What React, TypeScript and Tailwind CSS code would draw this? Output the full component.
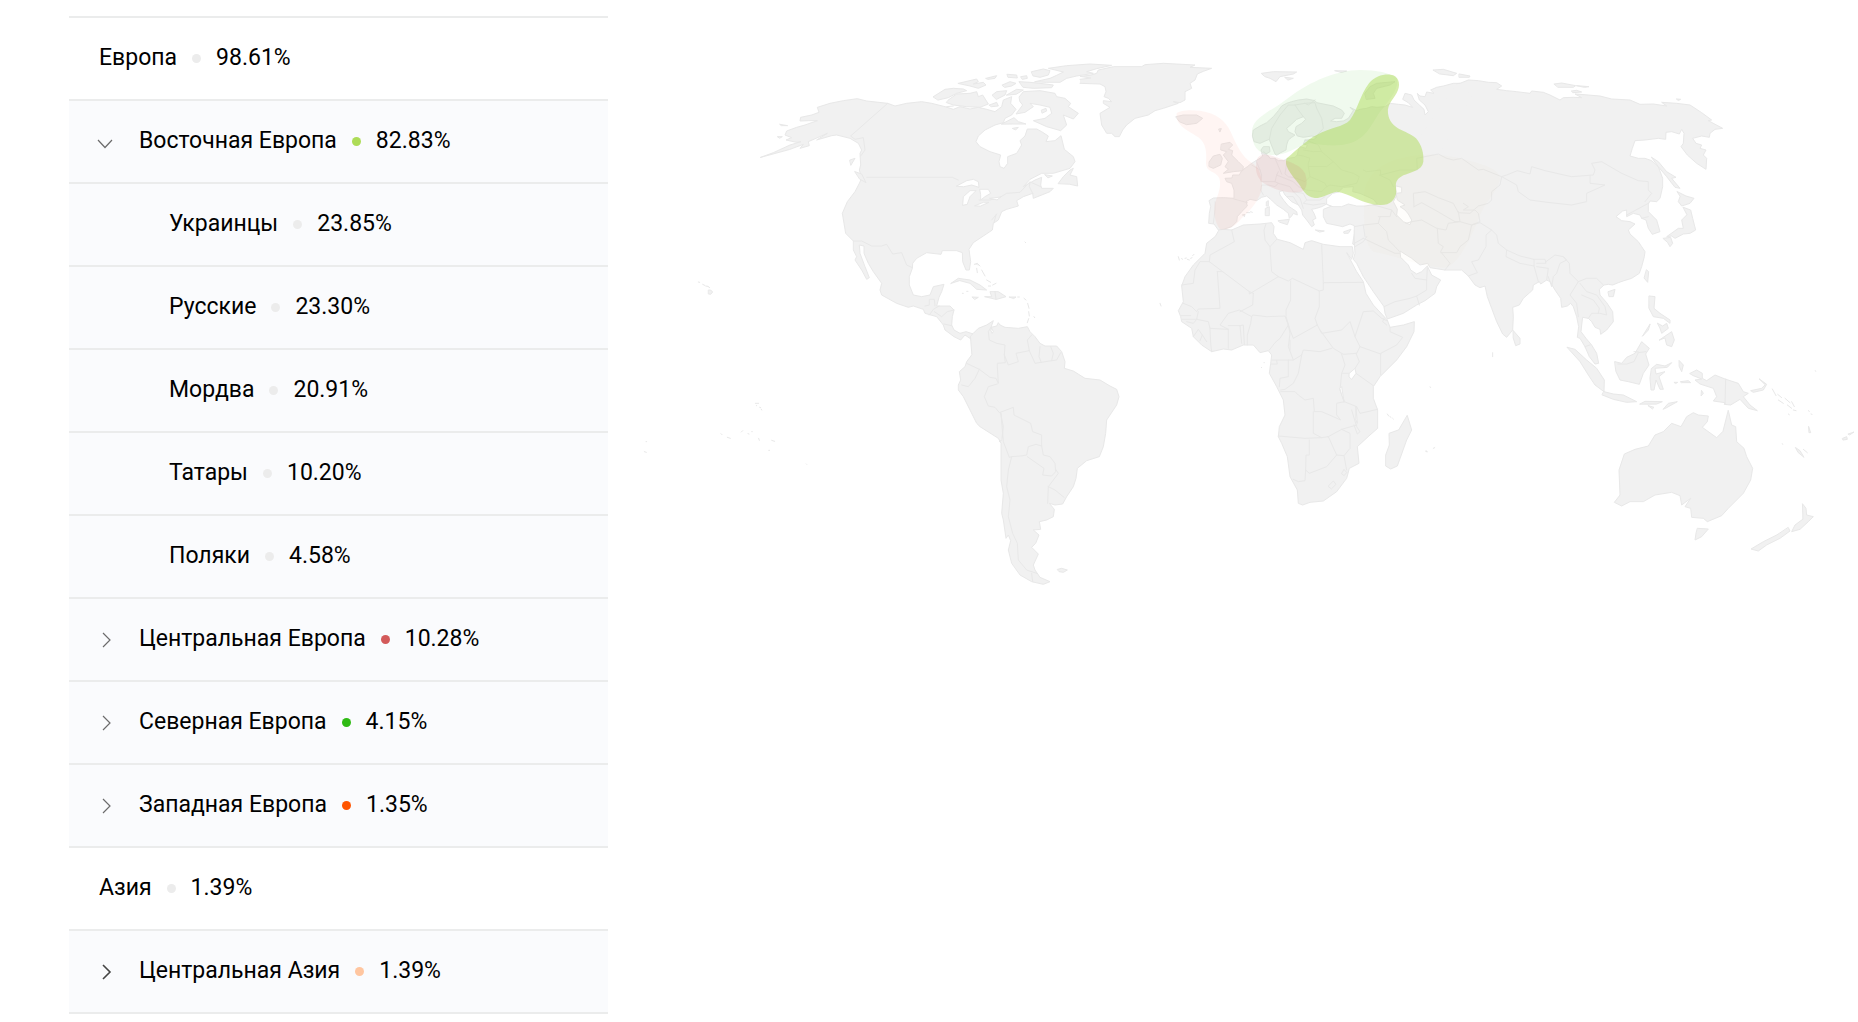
import { useState } from "react";
import clsx from "clsx";

interface Region {
  id: string;
  name: string;
  value: string;
  level: 0 | 1 | 2;
  dot: string;
  parent?: string;
  strong?: boolean;
}

const REGIONS: Region[] = [
  { id: "europe", name: "Европа", value: "98.61%", level: 0, dot: "bg-[#ececec]" },
  { id: "east", name: "Восточная Европа", value: "82.83%", level: 1, dot: "bg-[#addc57]" },
  { id: "ukr", name: "Украинцы", value: "23.85%", level: 2, dot: "bg-[#ececec]", parent: "east" },
  { id: "rus", name: "Русские", value: "23.30%", level: 2, dot: "bg-[#ececec]", parent: "east" },
  { id: "mor", name: "Мордва", value: "20.91%", level: 2, dot: "bg-[#ececec]", parent: "east" },
  { id: "tat", name: "Татары", value: "10.20%", level: 2, dot: "bg-[#ececec]", parent: "east" },
  { id: "pol", name: "Поляки", value: "4.58%", level: 2, dot: "bg-[#ececec]", parent: "east" },
  { id: "central", name: "Центральная Европа", value: "10.28%", level: 1, dot: "bg-[#d35a5a]" },
  { id: "north", name: "Северная Европа", value: "4.15%", level: 1, dot: "bg-[#2fba14]" },
  { id: "west", name: "Западная Европа", value: "1.35%", level: 1, dot: "bg-[#ff5500]" },
  { id: "asia", name: "Азия", value: "1.39%", level: 0, dot: "bg-[#ececec]" },
  { id: "casia", name: "Центральная Азия", value: "1.39%", level: 1, dot: "bg-[#ffc6a0]", strong: true },
];

function Chevron({ open, strong }: { open: boolean; strong?: boolean }) {
  return (
    <svg viewBox="0 0 24 24" className="size-6 shrink-0" fill="none" stroke={strong ? "#444" : "#6b6b6b"} strokeWidth={strong ? 1.6 : 1.2} aria-hidden="true">
      <path d={open ? "M5 10 12 17.5 19 10" : "M10 5 17 12 10 19"} />
    </svg>
  );
}

function RowText({ region }: { region: Region }) {
  return (
    <span className="flex items-center gap-[15px] whitespace-nowrap">
      <span>{region.name}</span>
      <span className={clsx("size-[9px] rounded-full", region.dot)} />
      <span>{region.value}</span>
    </span>
  );
}

function RegionRow({ region, open, onToggle }: { region: Region; open: boolean; onToggle: () => void }) {
  return (
    <li className={clsx("h-[83px] border-b-2 border-[#ebecec]", region.level > 0 && "bg-[#fafbfd]")}>
      {region.level === 1 ? (
        <button type="button" aria-expanded={open} onClick={onToggle} className="flex h-full w-full cursor-pointer items-center gap-[22px] pl-6 text-left">
          <Chevron open={open} strong={region.strong} />
          <RowText region={region} />
        </button>
      ) : (
        <div className={clsx("flex h-full items-center", region.level === 0 ? "pl-[30px]" : "pl-[100px]")}>
          <RowText region={region} />
        </div>
      )}
    </li>
  );
}

const NORTH_AMERICA =
  "M62 322 100 308 150 285 183 275 170 277 138 270 155 263 135 255 140 243 170 232 195 225 232 212 205 212 180 213 182 202 215 195 237 187 232 172 270 160 310 152 352 146 380 153 443 160 465 168 500 160 545 155 575 160 615 170 640 178 660 170 690 177 715 172 740 178 765 185 785 170 790 150 815 140 812 160 828 178 815 195 795 205 790 218 765 225 735 240 715 258 708 275 720 290 750 305 782 315 777 335 780 350 792 355 803 340 803 320 830 310 845 285 840 272 855 258 862 237 890 237 905 245 925 258 918 275 945 272 963 257 973 298 1000 320 1005 335 990 355 940 370 905 370 870 388 850 410 885 390 905 382 902 405 905 415 940 415 930 425 880 445 878 430 850 440 830 452 835 468 800 478 785 485 775 510 760 520 757 540 730 558 700 578 687 598 692 635 688 660 678 660 668 635 667 608 650 602 607 602 603 613 560 608 530 625 518 640 517 655 508 680 508 705 520 735 545 740 570 735 580 710 612 703 605 725 597 742 590 768 630 768 642 780 637 800 635 825 642 840 660 850 678 845 700 852 697 870 675 855 662 870 642 860 615 840 610 825 590 800 555 790 550 778 520 768 505 772 470 760 425 735 420 720 425 700 400 665 385 640 372 610 372 588 358 585 360 610 375 650 388 683 380 688 365 660 345 630 350 620 340 600 340 573 317 550 312 520 307 490 322 455 345 425 358 400 365 385 358 360 362 345 360 310 365 300 355 280 330 265 290 255 275 257 230 270 262 250 205 275 208 287 180 295 190 283 150 298Z";

const ARCTIC_ISLANDS =
  "M580 140 615 118 640 115 670 117 680 122 650 130 625 143 595 150ZM625 150 650 132 690 130 710 125 715 140 728 135 745 162 720 172 680 170 640 165 620 158ZM655 100 710 87 715 95 700 102 730 97 738 105 715 115 690 108ZM738 85 770 77 765 85 745 88ZM757 135 770 125 800 122 795 135 770 148ZM748 165 770 157 775 168 755 170ZM787 105 810 95 828 100 815 108 795 112ZM802 73 830 75 832 84 805 82ZM843 80 860 77 862 85 848 88ZM838 95 870 97 900 100 940 105 935 113 880 115 850 112ZM875 65 910 57 930 62 925 75 900 82 880 78ZM885 95 930 85 950 76 970 66 925 55 980 47 1050 42 1115 46 1070 56 1040 65 1060 70 1010 78 980 85 960 97 920 97ZM800 135 830 118 850 120 830 132ZM838 140 850 125 900 122 945 130 950 140 975 145 992 160 985 170 1015 190 1000 207 970 195 980 225 962 242 920 230 880 212 915 205 935 190 930 172 900 165 870 160 880 170 855 187 828 192 848 165 840 155ZM785 222 822 203 835 215 858 222 820 222ZM818 235 835 232 828 239ZM905 180 918 175 920 183 907 189ZM955 400 970 380 990 360 1000 355 990 375 1010 380 1013 408 990 403ZM345 365 365 372 378 398 360 388ZM330 330 345 325 333 345ZM120 223 143 227 125 227ZM113 260 127 260 120 264ZM915 374 937 378 925 383Z";

const CARIBBEAN =
  "M633 700 655 685 690 690 720 705 740 720 710 718 690 700 660 692ZM735 740 755 740 750 725 775 725 798 740 770 748ZM808 741 828 741 822 745ZM697 741 715 742 705 748ZM703 643 712 640 720 648M710 655 712 668M725 660 735 678M740 690 752 697M768 700 758 705M745 708 752 708M833 741 838 741M852 745 858 750M863 760 867 775M866 785 868 798M866 806 862 818M882 800 884 803M855 576 857 578M667 730 670 730M680 724 684 724";

const NA_BORDERS =
  "M443 160 332 258 345 268 370 263 375 300 362 318M380 382 637 382 655 390M717 450 750 450 780 442 800 430 840 427 870 395 868 410 878 430M340 573 365 573 395 588 425 588 440 583 458 612 485 608 500 645 517 653M555 768 568 765 568 748 583 748 585 768M568 795 580 778 597 768M583 785 605 800 622 785 642 780M612 822 635 827M765 725 768 748M768 495 762 518M755 510 770 492M620 170 640 168M875 398 902 410";

const LAKES =
  "M650 408 680 392 700 388 715 395 717 412 695 405 672 410ZM668 465 670 440 690 422 708 422 690 440 682 462ZM720 418 745 418 752 430 735 440 722 450 722 435ZM705 467 730 457 747 457 722 468ZM750 445 782 441 772 449Z";

const GREENLAND =
  "M0 88 32 84 0 79 30 76 50 70 55 60 100 50 185 50 195 44 250 40 345 45 330 52 395 55 370 64 352 72 345 90 330 100 335 115 315 125 315 150 300 158 280 155 295 160 250 175 225 182 205 195 165 205 140 225 128 240 118 260 105 260 95 250 80 250 65 225 60 190 90 172 70 160 70 152 95 155 85 145 72 140 78 125 75 110 60 102 0 100";

const SOUTH_AMERICA =
  "M92 108 100 100 115 85 140 75 160 62 153 82 170 78 175 68 180 75 195 82 235 85 262 80 270 95 285 110 300 130 315 138 350 138 365 155 375 185 373 205 400 213 435 235 480 240 510 258 530 268 537 290 530 315 500 360 497 400 490 440 478 470 440 482 412 505 408 535 400 560 380 590 368 612 345 615 328 610 343 628 340 650 320 660 298 665 302 688 280 690 297 705 287 730 275 742 295 762 280 795 285 810 300 832 330 845 310 853 275 845 240 825 215 790 205 750 212 722 205 705 198 715 190 660 185 640 190 580 183 540 183 430 175 415 120 380 110 370 90 330 70 290 55 270 55 255 62 240 58 215 75 200 80 185 95 165Z";

const SA_BORDERS =
  "M153 82 145 95 148 120 170 130 195 135 193 165 196 188 172 190 172 200 175 250 168 235 150 232 118 208 80 190M118 208 105 235 85 260 65 255M172 252 145 260 133 290 145 318 165 322 178 338 220 322 222 345 272 370 278 395 305 405 305 438 288 433 265 440 260 465 243 468 215 470 208 472 190 425 183 340M305 438 310 465 330 470 345 490 347 515 335 528 308 525 312 505 262 470M347 508 355 520 325 560 323 610M325 560 345 570 372 592M215 470 205 510 200 560 210 600 205 650 218 700 232 730 235 780 260 810 290 820M193 165 205 195 235 185 228 160 268 152 262 120 275 105M268 152 285 190 335 182 340 160 332 140M300 140 297 170 303 185M335 182 350 180 362 158M185 420 178 425M275 820 278 845M182 340 190 380 186 415";

const AFRICA =
  "M180 57 215 60 250 45 300 42 335 38 342 50 340 70 352 88 390 98 430 118 435 98 455 92 490 103 540 110 577 110 580 130 575 148 560 128 590 185 610 215 618 250 640 285 668 315 682 330 690 352 730 345 763 335 762 365 740 410 710 450 680 480 660 500 640 530 640 565 653 600 653 655 630 675 592 710 597 760 568 775 560 805 530 845 490 873 450 877 428 885 415 880 412 840 390 800 382 740 365 700 355 680 358 650 375 615 370 570 350 530 328 490 332 460 335 435 325 422 300 428 280 405 250 405 215 420 190 417 155 425 125 405 100 380 95 355 65 335 62 320 55 302 70 275 65 228 75 200 100 165 135 130 140 100 165 80ZM742 617 755 660 740 690 712 768 692 777 677 768 677 735 688 705 687 670 715 660Z";

const AFRICA_BORDERS =
  "M215 60 223 95 205 105 150 135 148 155 120 155 105 180 100 220 65 225M148 155 268 245 268 252 355 200 335 185 330 110 315 90 312 60 318 42M330 110 350 88M172 185 188 185M172 185 180 295 115 297 110 305 95 290 70 280M62 317 92 317M65 328 110 328 115 305M110 328 145 335 150 355 205 358 180 345 205 310 238 300 275 320 278 315 320 320 375 318 385 345 360 385 345 398 328 420M280 250 278 285 240 305M268 245 280 250M355 200 385 213 397 205 478 243 478 290 465 325 472 345 400 385 390 360 378 320 378 300 392 270 392 213M478 243 490 240 490 218 610 217M490 218 485 105M472 345 485 370 545 360 570 335 585 380 600 410 590 430 550 433 520 415 480 360M585 380 610 305 640 303 665 325 680 332M680 345 668 335 672 325M690 352 690 365 728 382 710 405 662 430 662 495M600 410 662 432M545 433 555 465 545 490 540 540 553 575 530 580 530 615 542 630 520 620 485 605 463 605 460 565 435 570 415 555 405 545 362 545M553 575 590 590 600 610 653 598M588 490 640 527M588 430 598 455 585 475M545 490 568 490M390 420 390 390M385 345 390 370 385 410 400 450 335 450M400 450 425 435 430 420 480 425 515 415M425 435 415 490 400 520 375 538 362 540M385 450 385 500 360 505 358 530M350 452 352 462 333 462M460 605 460 670 485 683 435 685 355 678M485 683 505 680 530 735 552 737 570 715 570 670 545 658 590 645M505 680 545 658M448 690 448 735 438 735 437 780 435 812 415 815 400 808M437 780 448 790 500 770 530 735M552 737 558 770 560 780M505 828 520 813 528 823 515 836ZM545 790 552 778 560 788 553 796ZM575 600 590 650 600 665 592 672 582 645M205 358 205 415M205 347 240 347 245 400M240 347 250 345 253 403M262 405 262 375 272 340 275 320M155 425 152 400 150 355M100 380 115 358 127 375 120 392M127 375 140 395M80 335 100 340 110 328";

const AFRICA_LAKES = "M568 490 585 475 588 490 575 508 568 502ZM540 535 545 530 552 575ZM588 592 592 640 588 630Z";

// Europe up to the Levant, left open on the side where it meets Asia
const EUROPE =
  "M900 100 880 100 850 108 830 112 812 120 822 130 800 126 795 140 780 138 772 130 778 150 795 165 805 185 795 195 792 178 778 165 762 150 755 135 735 130 728 148 745 158 758 172 735 165 715 163 690 160 675 170 650 172 635 170 620 175 600 178 590 182 570 172 580 182 565 205 550 213 530 215 512 213 525 205 545 205 553 190 545 180 520 168 495 163 470 158 465 152 440 147 415 150 395 155 380 160 365 168 355 182 340 200 320 218 300 228 280 240 277 258 282 275 300 280 318 272 328 268 333 282 345 312 350 316 362 308 378 300 380 285 385 270 395 262 405 255 385 245 380 235 395 222 410 208 430 200 437 208 425 220 408 230 405 245 412 258 430 262 455 258 470 262 462 268 435 270 430 282 442 285 438 295 420 290 415 300 412 315 405 322 385 325 370 332 355 332 345 325 330 325 325 318 318 312 330 305 328 290 310 290 303 300 308 318 300 325 288 332 275 340 262 350 245 362 238 375 218 375 216 384 195 385 200 395 215 400 222 420 222 445 190 443 160 444 147 452 152 470 148 490 146 520 162 522 175 540 190 538 215 530 230 515 232 500 245 485 262 468 258 455 270 448 290 452 305 442 320 438 332 448 350 465 370 478 385 490 388 505 395 498 400 490 412 495 410 485 385 468 372 452 360 435 358 425 368 422 375 435 395 455 415 465 425 480 428 495 440 510 455 530 463 525 458 510 468 505 462 490 455 478 470 475 485 470 500 462 515 468 490 478 490 500 500 520 525 525 548 530 570 522 583 527 583 550 578 582 600 595";

const ASIA =
  "M170 101 180 100 205 90 235 92 265 97 290 98 305 108 290 118 320 122 350 125 390 130 395 123 430 127 450 135 480 150 490 143 520 142 545 143 525 132 540 133 600 138 635 147 690 150 720 163 760 162 800 168 785 157 830 160 870 165 905 188 935 210 925 212 968 235 945 238 930 250 928 262 905 258 878 265 888 280 905 285 900 295 918 300 910 315 920 325 918 358 890 340 862 315 843 290 850 280 852 250 845 238 838 252 815 245 798 247 797 268 775 265 735 270 705 272 697 295 690 318 715 325 735 325 755 332 775 350 788 385 788 410 780 445 770 455 750 453 745 462 745 485 770 510 780 545 757 553 745 535 738 510 725 505 720 495 700 490 680 500 680 480 668 483 648 500 665 512 690 515 705 522 685 540 690 552 715 575 725 590 735 605 733 620 725 650 718 670 695 685 672 692 655 698 638 705 625 703 612 705 598 718 600 735 620 758 638 785 640 815 620 840 602 853 600 838 585 832 575 815 565 805 548 802 545 825 543 845 558 865 575 885 590 910 596 940 585 942 568 920 555 890 540 865 532 862 536 830 530 800 520 770 512 760 502 768 485 772 482 745 465 720 450 695 440 690 422 702 418 695 400 705 398 720 370 745 358 765 338 772 340 800 338 840 320 862 308 852 290 815 275 775 262 740 255 708 240 713 225 705 205 678 185 660 135 660 90 653 83 640 60 645 35 625 0 603 2 622 25 645 32 660 50 672 65 665 82 648 95 675 122 690 110 710 105 730 75 752 50 765 10 790 -38 807 -45 790 -48 770 -80 725 -110 680 -130 640 -140 628 -135 610 -137 580 -137 540";

const ASIA_BORDERS =
  "M-110 360 -100 365 -58 360 -58 375 0 360 52 360 50 325 115 312 140 325 160 330 185 325 235 360 250 358 305 380 300 405 275 425 275 450 265 460 235 468 210 490 175 488 160 460 115 443 75 425 40 430 42 470M305 380 320 375 352 362 390 372 395 350 435 362 470 370 515 380 580 375 585 360 575 340 605 335 665 370 715 392 745 395 745 420 755 430 735 455M305 380 350 405 355 425 390 450 450 458 515 465 560 455 560 430 615 405 570 400 570 375M42 470 65 458 105 480 165 515 180 515 175 485M190 460 205 470 190 480 225 480 235 490 240 515 215 525 180 515 145 520 138 540 110 535 65 510 35 515 18 520M112 535 115 580 130 590 122 605 150 640 135 660M122 608 170 608 180 590 205 570 215 525 240 518 275 540 258 555 258 590 235 630 215 635 232 668 205 678M275 540 290 555 295 580 320 600 360 618 402 628 402 648 360 640 318 620 320 600M402 628 435 628 438 640 410 640M402 648 415 695M410 650 445 655 440 690M438 635 465 615 490 620 500 630 480 640 470 670 460 680 455 710 445 680M490 620 508 640 510 670 535 695 510 735 530 760 535 800M535 695 560 685 590 685 610 705M540 700 560 725 590 735 615 770 620 795 600 790 575 790 565 805M545 735 580 750 598 775 595 790M555 890 570 885M680 495 745 460M725 505 745 500M-65 520 -40 545 -35 570 -15 590 -3 603M-60 500 -65 520 -110 525 -137 530M-110 565 -137 580M-100 560 -110 575 -135 590M-110 565 -15 610 0 610M-110 525 -105 560M-48 770 -15 755 30 745 50 738 58 765M50 738 80 720 80 690 45 685 35 670M80 690 82 655M-80 465 -60 470 -25 480 -30 500 -65 500M-25 480 -10 500";

const EUROPE_BORDERS =
  "M328 268 335 235 360 195 385 165 405 165 435 160 465 158 470 175 485 205 490 235 470 258M430 200 415 180 405 165M435 160 445 165 465 150M435 270 450 275 475 285 485 305 520 335 500 350 445 350 445 340 450 325 430 318 412 315M430 300 460 305 485 305M445 350 450 380 435 395 410 385 385 380 375 372 380 340M450 380 475 390 495 400 500 410 485 425 440 420 415 410 400 395 375 385 350 375 355 365M520 335 545 360 580 370 598 380 590 400 545 410 510 405 500 410M288 332 300 360 305 375 302 395 345 395 355 400 345 410 325 405 305 405 302 420 310 435M275 345 300 360M350 375 345 395M355 400 390 410 400 425 430 430 440 450 430 460 460 465 495 460M400 425 420 445 430 475M440 450 480 450 495 440M222 447 262 458M165 455 165 480 160 520M380 440 400 440 415 465M658 375 690 390 700 410M310 310 325 318M345 325 365 372";

const BLACK_SEA = "M500 462 500 446 518 430 535 426 550 412 580 410 578 425 600 430 640 448 652 462 615 468 590 468 565 462 545 470 520 470Z";
const CASPIAN = "M708 440 700 455 712 478 710 495 730 515 750 524 755 510 745 492 735 480 720 470 735 465 712 450 708 430 725 428 725 412 708 408Z";

const EUROPE_ISLANDS =
  "M185 282 210 277 218 285 205 298 218 302 215 315 235 335 250 350 248 362 220 365 190 370 205 358 195 350 205 335 190 315 200 305 183 300ZM148 335 160 318 180 313 187 325 182 345 160 355 148 350ZM48 200 70 195 110 195 128 205 110 220 80 224 60 216ZM305 70 340 65 410 66 400 72 360 80 348 95 330 85 315 80ZM375 82 400 85 385 90ZM615 130 630 110 650 100 705 95 690 105 650 115 640 130 645 145 620 148ZM820 60 850 58 890 70 880 77 840 72ZM898 72 930 78 928 82 898 82ZM525 62 560 63 545 67ZM317 475 328 470 328 497 317 497ZM320 455 325 452 325 468 320 468ZM355 512 388 508 382 524 360 517ZM467 540 493 543 480 546ZM552 545 573 538 565 550 553 550ZM247 495 255 493 253 500M260 488 270 488M272 485 277 487M177 237 184 236 180 245ZM305 310 312 305 318 312Z";

const ASIA_ISLANDS =
  "M463 102 485 99 527 107 520 112 475 112ZM530 107 567 110 555 112ZM515 123 530 121 545 126 520 128ZM830 147 842 148 836 151ZM755 322 775 335 800 365 828 382 815 385 840 415 825 412 800 380 775 350ZM832 425 858 438 882 445 870 460 845 468 835 455 840 440ZM850 472 872 480 878 505 887 540 870 550 850 552 825 565 815 558 800 560 835 535 850 535 845 510 860 495ZM790 565 812 562 818 580 810 590 803 578ZM740 660 746 665 743 697 733 685ZM625 725 645 718 640 740 628 740Z";

const OCEANIA =
  "M100 302 120 325 120 342 107 347 100 325ZM508 198 525 200 522 235 540 250 570 270 570 280 550 265 520 260 507 235ZM533 280 548 288 560 280 565 295 545 310 540 295ZM510 283 505 300 488 318ZM538 330 575 305 583 330 575 350 560 345 555 325ZM262 352 285 358 320 390 350 415 373 450 372 485 345 465 325 435 300 395ZM372 485 400 492 430 495 470 515 440 517 400 508 367 495ZM405 395 425 400 440 382 465 370 485 335 508 355 497 372 507 405 490 430 478 463 445 455 420 450 408 425ZM515 415 530 403 555 408 575 398 562 412 525 415 528 432 555 425 537 440 550 478 540 478 528 450 522 480 513 480 510 445ZM598 392 610 405 605 425 598 410ZM583 457 593 457 588 460ZM602 455 625 452 632 458 605 458ZM630 430 650 420 667 430 667 445 680 452 705 435 735 447 775 460 790 485 805 490 790 500 810 525 832 542 805 535 780 508 752 525 733 523 735 518 700 513 710 500 700 475 660 462 645 450 665 447 640 437ZM665 482 670 490 664 497ZM480 522 495 514 547 515 530 522ZM505 527 522 532 518 536ZM550 537 565 520 592 515 560 533ZM745 542 755 585 767 590 770 635 792 655 800 680 818 715 812 750 790 790 745 835 725 857 682 875 670 865 635 862 632 835 615 830 632 805 605 825 600 797 575 787 525 795 490 815 450 815 425 828 403 817 420 795 417 720 433 672 465 658 505 648 525 615 550 605 575 580 603 590 620 560 640 548 655 555 685 558 682 575 667 592 710 623 728 605ZM653 895 685 897 665 920 645 930 648 910ZM968 822 978 835 980 855 1000 860 985 875 960 898 935 905 945 885 968 868ZM925 893 930 903 900 925 860 945 835 963 813 957 850 935 890 915ZM838 447 860 463 850 480 820 487 812 482 845 475 855 465ZM877 477 888 497M893 493 905 503M895 510 910 520M915 505 930 518M935 515 943 530M922 525 935 535M940 540 948 542M925 552 928 554M985 542 988 544M993 552 996 553M986 590 992 608 988 608ZM947 653 960 662 972 682 955 668ZM970 658 982 668M1088 625 1100 620 1102 628 1090 630ZM1105 612 1122 606 1110 614ZM907 641 908 643M1006 422 1007 424M38 368 38 380";

const PACIFIC =
  "M175 66 179 67M188 73 194 76M197 78 204 79 209 83M206 90 212 90 218 96 212 103 206 102ZM346 430 356 430M349 437 350 437M359 442 362 443M364 448 365 450M243 521 246 524M262 532 271 535M304 516 308 512M324 521 327 522M335 515 337 515M356 535 358 541M395 541 404 544M386 571 389 571M499 612 500 613M18 545 20 545M13 575 19 577";

const ATLANTIC_INDIAN =
  "M55 140 58 150M65 145 67 148M75 145 79 144M82 148 88 150M92 145 96 143M98 137 102 133M0 280 3 288M312 458 313 458M304 472 305 473M682 612 686 618M690 620 693 622M698 625 700 627M797 724 802 726 799 722M820 715 824 713M810 531 812 532";

function WorldMap() {
  return (
    <svg viewBox="1824 0 3750 1800" className="h-auto w-full" role="img" aria-label="Карта мира" strokeLinejoin="round" strokeLinecap="round">
      <g fill="#f1f1f1" stroke="#e8e8e8" strokeWidth="3">
        <g transform="translate(1920 780)">
          <path d={PACIFIC} />
        </g>
        <g transform="translate(2220 150)">
          <path d={NORTH_AMERICA} />
          <path d={ARCTIC_ISLANDS} />
          <path d={CARIBBEAN} />
          <path d={NA_BORDERS} fill="none" />
          <path d={LAKES} fill="#fff" />
        </g>
        <path d={GREENLAND} transform="translate(3240 150)" />
        <g transform="translate(2820 900)">
          <path d={SOUTH_AMERICA} />
          <path d={SA_BORDERS} fill="none" />
          <path d="M155 85 160 95 156 100 153 92Z" fill="#fff" />
          <path d="M353 808 365 805 382 810 370 817 358 815Z" />
        </g>
        <g transform="translate(3480 630)">
          <path d={AFRICA} />
          <path d={AFRICA_BORDERS} fill="none" />
          <path d={AFRICA_LAKES} fill="#fff" />
          <path d={ATLANTIC_INDIAN} fill="none" />
        </g>
        <path d={EUROPE} transform="translate(3480 150)" />
        <path d={ASIA} transform="translate(4200 150)" />
        <path d="M590 525 880 120 940 130 700 560 600 580Z" transform="translate(3480 150)" stroke="none" />
        <g transform="translate(3480 150)">
          <path d={EUROPE_BORDERS} fill="none" />
          <path d={EUROPE_ISLANDS} />
          <path d={BLACK_SEA} fill="#fff" />
          <path d={CASPIAN} fill="#fff" />
        </g>
        <g transform="translate(4200 150)">
          <path d={ASIA_BORDERS} fill="none" />
          <path d={ASIA_ISLANDS} />
        </g>
        <g transform="translate(4440 690)">
          <path d={OCEANIA} />
          <path d="M737 447 735 523M413 402 440 402 462 395 475 368 497 365M462 365 475 366" fill="none" />
        </g>
      </g>

      {/* ancestry regions */}
      <g transform="translate(3480 150)">
        <path fill="#d8b080" fillOpacity="0.03" d="M612 440C610 400 640 345 720 325 780 308 850 310 920 330 980 345 1025 362 1020 390 1010 430 970 460 955 510 920 590 890 650 850 653 780 650 720 620 640 605 610 580 612 520 612 440Z" />
        <path fill="#ff5a32" fillOpacity="0.06" d="M50 190C60 180 90 179 120 182 170 190 195 210 212 245 230 285 245 320 275 338 300 350 310 390 305 420 290 465 265 485 245 505 225 530 205 542 180 538 165 520 160 490 165 460 175 430 185 410 178 385 165 360 140 370 138 340 140 310 140 280 115 262 80 240 45 225 50 190Z" />
        <path fill="#2fba14" fillOpacity="0.07" d="M277 235C285 200 340 180 390 140 450 95 530 60 600 60 650 60 690 68 710 85 720 110 690 150 660 185 630 230 620 262 570 280 530 292 490 285 450 280 420 285 390 310 350 315 310 318 285 300 280 275 276 260 275 248 277 235Z" />
        <path fill="#addc57" fillOpacity="0.5" d="M380 325C410 300 440 270 470 255 510 232 550 232 570 210 595 175 600 135 627 100 645 78 670 72 692 74 715 76 722 100 714 120 705 145 680 160 684 190 690 240 740 240 768 265 785 285 792 310 790 335 786 362 755 365 730 376 705 390 706 400 709 425 706 450 690 466 660 465 610 464 570 430 530 425 505 430 490 444 465 444 435 440 430 420 415 400 400 380 370 350 380 325Z" />
        <path fill="#d35a5a" fillOpacity="0.1" d="M290 330C295 315 310 310 330 316 370 330 420 340 435 370 445 400 440 425 415 427 380 430 330 415 305 395 285 375 286 350 290 330Z" />
      </g>
    </svg>
  );
}

export default function App() {
  const [opened, setOpened] = useState<string[]>(["east"]);

  const toggle = (id: string) =>
    setOpened((prev) => (prev.includes(id) ? prev.filter((x) => x !== id) : [...prev, id]));

  const visible = REGIONS.filter((r) => !r.parent || opened.includes(r.parent));

  return (
    <main className="flex min-h-screen items-start bg-white font-['Roboto',sans-serif] text-[23px] text-black">
      <div className="w-[608px] shrink-0 pt-4 pl-[69px]">
        <ul className="border-t-2 border-[#ebecec]">
          {visible.map((region) => (
            <RegionRow key={region.id} region={region} open={opened.includes(region.id)} onToggle={() => toggle(region.id)} />
          ))}
        </ul>
      </div>
      <div className="min-w-0 flex-1">
        <WorldMap />
      </div>
    </main>
  );
}
